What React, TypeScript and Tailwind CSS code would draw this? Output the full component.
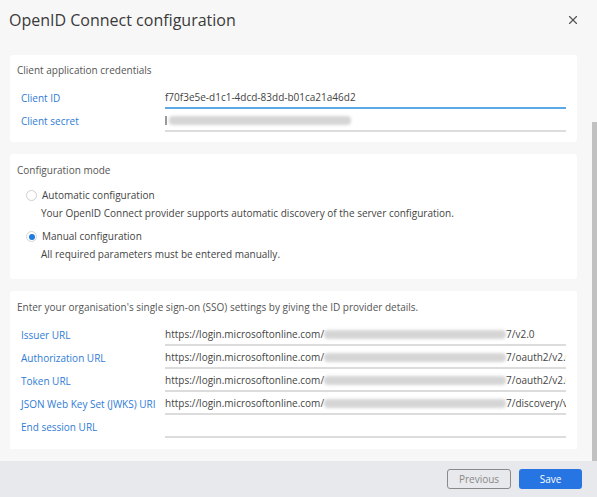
import { X } from "lucide-react";

const font = { fontFamily: '"Open Sans", "Noto Sans", sans-serif' };

function Field({ label, value, active }: { label: string; value?: React.ReactNode; active?: boolean }) {
  return (
    <div className="flex items-end h-[23px]">
      <div className="w-[144px] shrink-0 self-center pt-[1px] text-[#2f7cd6] whitespace-nowrap">{label}</div>
      <div
        className={
          "flex-1 h-[21px] flex items-center overflow-hidden whitespace-nowrap text-[#444] border-b-2 " +
          (active ? "border-[#5aa9e6]" : "border-[#dcdcdc]")
        }
      >
        {value}
      </div>
    </div>
  );
}

function Blur({ w }: { w: number }) {
  return (
    <span
      className="inline-block shrink-0 h-[9px] rounded-sm bg-[#c4c4c4] blur-[1.5px] opacity-70 align-middle"
      style={{ width: w }}
    />
  );
}

function Url({ w, after }: { w: number; after: string }) {
  return (
    <span className="flex items-center">
      <span>https://login.microsoftonline.com/</span>
      <Blur w={w} />
      <span>{after}</span>
    </span>
  );
}

export default function App() {
  return (
    <div className="relative w-[597px] h-[497px] bg-[#f7f7f7] flex flex-col overflow-hidden text-[10px] text-[#444]" style={font}>
      <div className="h-[39px] shrink-0 flex items-center justify-between pl-[9px] pr-[17px]">
        <h1 className="text-[16px] text-[#3a3a3a]">OpenID Connect configuration</h1>
        <X size={14} strokeWidth={2} className="text-[#555]" />
      </div>

      <div className="flex-1 flex flex-col gap-[12px] pl-[10px] pr-[20px] pt-[16px]">
        <section className="bg-white rounded-[3px] px-[7px] pt-[8px] pb-[10px]">
          <p className="text-[#555] mb-[8px]">Client application credentials</p>
          <div className="pl-[4px] pr-[4px]">
            <Field label="Client ID" value="f70f3e5e-d1c1-4dcd-83dd-b01ca21a46d2" active />
            <Field
              label="Client secret"
              value={
                <span className="flex items-center">
                  <span className="w-[2px] h-[9px] bg-[#999] mr-[2px]" />
                  <Blur w={182} />
                </span>
              }
            />
          </div>
        </section>

        <section className="bg-white rounded-[3px] px-[7px] pt-[9px] h-[125px]">
          <p className="text-[#555] mb-[10px]">Configuration mode</p>
          <div className="pl-[9px] flex flex-col">
            <div className="flex items-center gap-[5px]">
              <span className="w-[11px] h-[11px] rounded-full border border-[#cfcfcf] bg-white" />
              <span>Automatic configuration</span>
            </div>
            <p className="pl-[15px] mt-[3px]">Your OpenID Connect provider supports automatic discovery of the server configuration.</p>
            <div className="flex items-center gap-[5px] mt-[8px]">
              <span className="w-[11px] h-[11px] rounded-full border border-[#d5d5d5] bg-white flex items-center justify-center">
                <span className="w-[6px] h-[6px] rounded-full bg-[#1f7be0]" />
              </span>
              <span>Manual configuration</span>
            </div>
            <p className="pl-[15px] mt-[3px]">All required parameters must be entered manually.</p>
          </div>
        </section>

        <section className="bg-white rounded-t-[3px] px-[7px] pt-[9px] pb-[11px]">
          <p className="text-[#555] mb-[8px]">Enter your organisation's single sign-on (SSO) settings by giving the ID provider details.</p>
          <div className="pl-[4px] pr-[4px]">
            <Field label="Issuer URL" value={<Url w={182} after="7/v2.0" />} />
            <Field label="Authorization URL" value={<Url w={182} after="7/oauth2/v2.0/authorize" />} />
            <Field label="Token URL" value={<Url w={182} after="7/oauth2/v2.0/token" />} />
            <Field label="JSON Web Key Set (JWKS) URI" value={<Url w={182} after="7/discovery/v2.0/keys" />} />
            <Field label="End session URL" value="" />
          </div>
        </section>
      </div>

      <div className="h-[36px] shrink-0 bg-[#e8e9ed] flex items-center justify-end gap-[8px] pr-[15px]">
        <button className="w-[64px] h-[20px] rounded-[3px] border border-[#8a8a8a] text-[#888] bg-transparent">Previous</button>
        <button className="w-[63px] h-[20px] rounded-[3px] bg-[#2775e2] text-white">Save</button>
      </div>

      <div className="absolute right-0 top-[122px] w-[5px] h-[339px] bg-[#c1c1c1]" />
    </div>
  );
}
